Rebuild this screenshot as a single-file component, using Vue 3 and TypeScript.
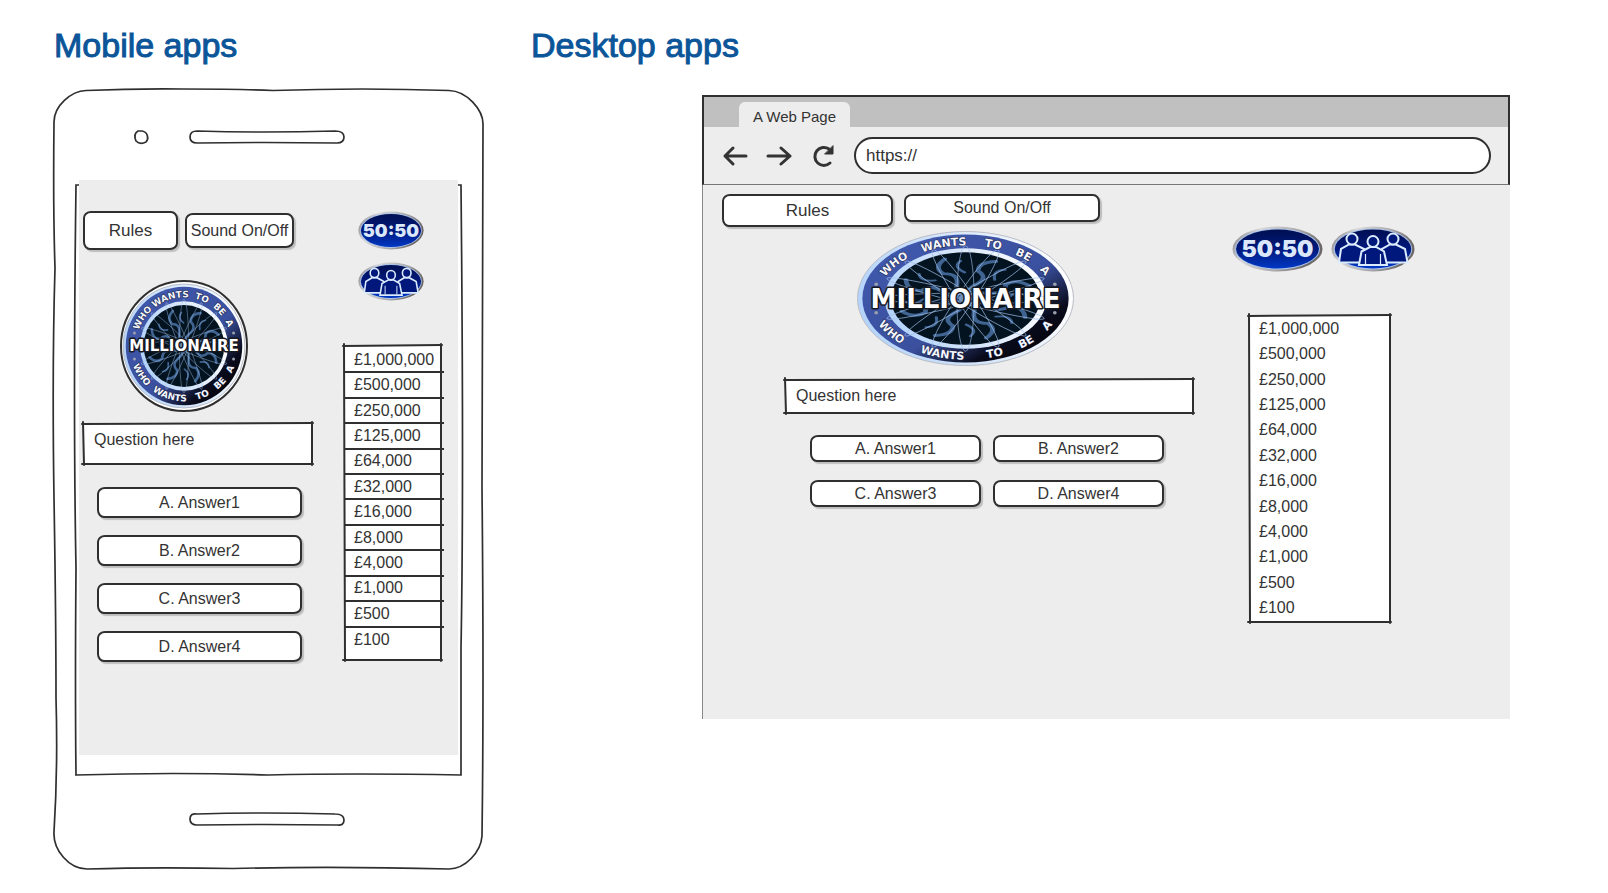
<script setup lang="ts">
import { h } from 'vue'

interface LogoProps {
  w: number
  h: number
  rx: number
  ry: number
  inner: number
  ring: number
  title: number
  disc?: boolean
}

const prizes: string[] = [
  '£1,000,000', '£500,000', '£250,000', '£125,000', '£64,000', '£32,000',
  '£16,000', '£8,000', '£4,000', '£1,000', '£500', '£100',
]
const answers: string[] = ['A. Answer1', 'B. Answer2', 'C. Answer3', 'D. Answer4']

const words: Array<[string, number]> = [
  ['WHO', 12], ['WANTS', 39], ['TO', 64], ['BE', 80], ['A', 93],
]

/* Hand-drawn rectangle outline: four strokes that cross slightly at the corners. */
const Frame = () =>
  h('svg', { class: 'frame', 'aria-hidden': 'true' }, [
    h('g', { stroke: '#2f2f2f', 'stroke-width': 2, 'stroke-linecap': 'round' }, [
      h('line', { x1: -1, y1: 1, x2: '100%', y2: 0 }),
      h('line', { x1: 0, y1: -1, x2: 1, y2: '100%' }),
      h('g', { transform: 'translate(0 -1)' }, [h('line', { x1: -1, y1: '100%', x2: '100%', y2: '100%' })]),
      h('g', { transform: 'translate(-1 0)' }, [h('line', { x1: '100%', y1: -1, x2: '100%', y2: '100%' })]),
    ]),
  ])

/* Show emblem: an elliptical ring with curved lettering and a title across it. */
const Logo = (p: LogoProps) => {
  const cx = p.w / 2
  const cy = p.h / 2
  const id = `ring-${p.w}`
  const arc = (rx: number, ry: number, down: boolean): string => {
    const a = (16 * Math.PI) / 180
    const dx = rx * Math.cos(a)
    const dy = ry * Math.sin(a) * (down ? 1 : -1)
    return `M${cx - dx} ${cy + dy} A${rx} ${ry} 0 0 ${down ? 0 : 1} ${cx + dx} ${cy + dy}`
  }
  const mid = (0.955 + p.inner + 0.02) / 2
  const half = p.ring * 0.37
  const ell = (k: number, fill: string, stroke = 'none', sw = 0) =>
    h('ellipse', { cx, cy, rx: p.rx * k, ry: p.ry * k, fill, stroke, 'stroke-width': sw })
  const lettering = (path: string) =>
    words.map(([word, at]) =>
      h('text', {
        'font-size': p.ring, 'font-weight': 700, fill: '#f4f6ff', stroke: '#1b2140', 'stroke-width': 1,
        'paint-order': 'stroke', 'text-anchor': 'middle',
      }, [h('textPath', { href: `#${path}`, startOffset: `${at}%` }, word)]))
  const stars = [[-1, -1], [1, -1], [-1, 1], [1, 1]].map(([x, y]) =>
    h('circle', { cx: cx + x * p.rx * mid * 0.97, cy: cy + y * p.ry * mid * 0.25, r: p.ring / 6, fill: '#9aa0ac' }))
  return h('svg', {
    class: 'logo', viewBox: `0 0 ${p.w} ${p.h}`, width: p.w, height: p.h, role: 'img',
    'aria-label': 'Who Wants To Be A Millionaire',
  }, [
    h('path', { id: `${id}-top`, fill: 'none', d: arc(p.rx * mid - half, p.ry * mid - half, false) }),
    h('path', { id: `${id}-bottom`, fill: 'none', d: arc(p.rx * mid + half, p.ry * mid + half, true) }),
    p.disc
      ? h('ellipse', { cx, cy, rx: cx - 1, ry: cy - 1, fill: '#fff', stroke: '#2f2f2f', 'stroke-width': 2 })
      : null,
    ell(1, 'url(#rim)', '#b9bcc4', 1),
    ell(0.955, 'url(#ring)'),
    ell(p.inner + 0.02, 'url(#rim)'),
    ell(p.inner - 0.04, '#03131f'),
    h('g', { transform: `translate(${cx} ${cy}) scale(${(p.rx * p.inner) / 100} ${(p.ry * p.inner) / 100})` }, [
      h('use', { href: '#spiro' }),
    ]),
    ...lettering(`${id}-top`),
    ...lettering(`${id}-bottom`),
    ...stars,
    h('text', {
      x: cx, y: cy + p.title * 0.36, 'font-size': p.title, 'font-weight': 700, fill: '#fff', stroke: '#16181f',
      'stroke-width': 3, 'stroke-linejoin': 'round', 'paint-order': 'stroke', 'text-anchor': 'middle',
    }, 'MILLIONAIRE'),
  ])
}
Logo.props = ['w', 'h', 'rx', 'ry', 'inner', 'ring', 'title', 'disc']
</script>

<template>
  <main class="board">
    <svg class="defs" aria-hidden="true">
      <defs>
        <linearGradient id="rim" x1="0" y1="0.6" x2="1" y2="0.4">
          <stop offset="0" stop-color="#b3d3fb" />
          <stop offset="0.5" stop-color="#d6e6fb" />
          <stop offset="1" stop-color="#ffffff" />
        </linearGradient>
        <linearGradient id="ring" x1="0.1" y1="0.1" x2="0.86" y2="0.86">
          <stop offset="0" stop-color="#4058ac" />
          <stop offset="0.62" stop-color="#3a509f" />
          <stop offset="0.88" stop-color="#090b1c" />
          <stop offset="1" stop-color="#05060f" />
        </linearGradient>
        <linearGradient id="metal" x1="0" y1="0" x2="1" y2="0.3">
          <stop offset="0" stop-color="#77747a" />
          <stop offset="0.3" stop-color="#d8d8dc" />
          <stop offset="0.7" stop-color="#aaa8aa" />
          <stop offset="1" stop-color="#6d6767" />
        </linearGradient>
        <linearGradient id="blue" x1="0" y1="0" x2="0" y2="1">
          <stop offset="0" stop-color="#000f52" />
          <stop offset="0.5" stop-color="#00187c" />
          <stop offset="1" stop-color="#0038c4" />
        </linearGradient>
        <symbol id="oval" viewBox="0 0 90 46" preserveAspectRatio="none">
          <ellipse cx="45" cy="23" rx="44.500" ry="22.500" fill="url(#metal)" />
          <ellipse cx="45" cy="23" rx="42" ry="20.500" fill="#a9c3ea" />
          <ellipse cx="45" cy="23" rx="41" ry="19.500" fill="url(#blue)" />
        </symbol>
        <symbol id="audience" viewBox="0 0 84 46" preserveAspectRatio="none">
          <g fill="#00187c" stroke="#dcecff" stroke-width="2" stroke-linejoin="miter">
            <path d="M8 36.500 10 23 18 18.500H24L33 23 35 36.500Z" />
            <circle cx="21" cy="13" r="5.500" />
            <path d="M49 36.500 51 23 59 18.500H65L74 23 76.500 36.500Z" />
            <circle cx="62" cy="13" r="5.500" />
            <path d="M28 39 30.500 25.500 39 21H45L53 25.500 56 39Z" />
            <circle cx="42" cy="15.500" r="5.500" />
            <path d="M34.500 38V28M49.500 38V28" stroke-width="1.200" />
          </g>
        </symbol>
        <g id="spiro" fill="none">
          <g stroke="#3f6492" stroke-width="6" stroke-linecap="round">
            <g v-for="a in 8" :key="`s${a}`" :transform="`rotate(${a * 45 + 12})`">
              <path d="M22 -82Q0 -76 4 -58Q20 -48 8 -32Q-2 -22 0 -4" />
              <path d="M-22 -74Q-30 -60 -12 -52" stroke-width="4" />
            </g>
          </g>
          <g stroke="#9fbde8" stroke-width="1">
            <ellipse v-for="a in 8" :key="`e${a}`" rx="11" ry="108" :transform="`rotate(${a * 22.5})`" />
          </g>
          <circle r="9" fill="#86a8d6" opacity="0.700" />
        </g>
      </defs>
    </svg>

    <section class="mobile">
      <h2>Mobile apps</h2>
      <div class="phone">
        <svg class="shell" viewBox="0 0 430 781" preserveAspectRatio="none" aria-hidden="true">
          <g fill="#fff" stroke="#2f2f2f" stroke-width="1.700">
            <path d="M33 2.500Q80 .5 130 1Q190 1 220 2.500Q310 -.5 396 2.500C414 3 430 22 430 36Q430 200 429 400Q431 600 429 748C428 764 412 781 396 781Q280 778 180 780.500Q100 779 34 781C16 781 0 762 1 744Q5 680 3 610Q3 530 1 410Q-1 280 2 180Q0 120 1 34C1 18 18 3 33 2.500Z" />
            <path d="M89 43C95 44 96 51 93 54Q87 57 83 53Q80 46 85 43Z" />
            <path d="M144 43Q210 45 282 43Q291 43 291 49T284 55Q210 54 144 55Q137 55 137 49T144 43Z" />
            <path d="M23 97H408Q411 400 408 560V687Q300 685 215 687Q120 684 23 687Q22 600 23 480Q20 320 23 97Z" />
            <path d="M144 726Q210 724 282 726Q291 726 291 732T284 737Q210 736 144 737Q137 737 137 731T144 726Z" />
          </g>
        </svg>
        <div class="screen">
          <div class="play">
            <div class="tools">
              <button type="button" class="btn rules">Rules</button>
              <button type="button" class="btn sound">Sound On/Off</button>
            </div>
            <Logo :w="128" :h="132" :rx="61" :ry="62" :inner="0.7" :ring="9" :title="15" :disc="true" />
            <div class="question">
              <textarea aria-label="Question" readonly value="Question here"></textarea>
              <Frame />
            </div>
            <div class="answers">
              <button v-for="a in answers" :key="a" type="button" class="btn">{{ a }}</button>
            </div>
          </div>
          <div class="side">
            <div class="lifelines">
              <button type="button" class="life"><svg aria-hidden="true"><use href="#oval" /></svg><span>50:50</span></button>
              <button type="button" class="life" aria-label="Ask the audience">
                <svg aria-hidden="true"><use href="#oval" /><use href="#audience" /></svg>
              </button>
            </div>
            <div class="ladder">
              <ol><li v-for="p in prizes" :key="p">{{ p }}</li></ol>
              <Frame />
            </div>
          </div>
        </div>
      </div>
    </section>

    <section class="desktop">
      <h2>Desktop apps</h2>
      <div class="browser">
        <div class="tabs"><span class="tab">A Web Page</span></div>
        <div class="bar">
          <button type="button" class="nav" aria-label="Back">
            <svg viewBox="0 0 26 26"><path d="M24 13H3M11 5 3 13 11 21" /></svg>
          </button>
          <button type="button" class="nav" aria-label="Forward">
            <svg viewBox="0 0 26 26"><path d="M2 13H24M15 5 24 13 15 21" /></svg>
          </button>
          <button type="button" class="nav" aria-label="Reload">
            <svg viewBox="0 0 26 26"><path d="M19 6A9 9 0 1 0 20 20" /><path class="tip" d="M23 3V11H15Z" /></svg>
          </button>
          <input type="text" value="https://" aria-label="Address" />
        </div>
        <div class="page">
          <div class="play">
            <div class="tools">
              <button type="button" class="btn rules">Rules</button>
              <button type="button" class="btn sound">Sound On/Off</button>
            </div>
            <Logo :w="217" :h="135" :rx="108" :ry="67" :inner="0.73" :ring="11" :title="26" />
            <div class="question">
              <textarea aria-label="Question" readonly value="Question here"></textarea>
              <Frame />
            </div>
            <div class="answers">
              <button v-for="a in answers" :key="a" type="button" class="btn">{{ a }}</button>
            </div>
          </div>
          <div class="side">
            <div class="lifelines">
              <button type="button" class="life fifty"><svg aria-hidden="true"><use href="#oval" /></svg><span>50:50</span></button>
              <button type="button" class="life" aria-label="Ask the audience">
                <svg aria-hidden="true"><use href="#oval" /><use href="#audience" /></svg>
              </button>
            </div>
            <div class="ladder">
              <ol><li v-for="p in prizes" :key="p">{{ p }}</li></ol>
              <Frame />
            </div>
          </div>
        </div>
      </div>
    </section>
  </main>
</template>

<style>
body {
  margin: 0;
  background: #fff;
}
.logo text {
  font-family: "DejaVu Sans", sans-serif;
}
</style>

<style scoped>
.board {
  display: flex;
  gap: 47px;
  padding: 23px 98px 23px 53px;
  font-family: "Liberation Sans", Arial, sans-serif;
  font-size: 16px;
  color: #333;
}
.board * {
  box-sizing: border-box;
}
.defs {
  position: absolute;
  width: 0;
  height: 0;
}
h2 {
  margin: 0;
  padding-left: 1px;
  font-size: 34px;
  line-height: 44px;
  font-weight: 400;
  color: #0b5599;
  -webkit-text-stroke: 1px #0b5599;
}
button,
input,
textarea {
  font: inherit;
  color: inherit;
  margin: 0;
  padding: 0;
}
.mobile {
  flex: none;
  width: 430px;
}
.desktop {
  flex: 1;
  min-width: 0;
}
.frame,
.shell {
  position: absolute;
  inset: 0;
  width: 100%;
  height: 100%;
  overflow: visible;
  pointer-events: none;
}
.btn {
  background: #fff;
  border: 2px solid #2f2f2f;
  border-radius: 8px 7px 8px 7px / 7px 8px 7px 8px;
  box-shadow: 2px 2px 1px #bdbdbd;
  white-space: nowrap;
}
.rules {
  font-size: 17px;
}
.tools {
  display: flex;
  align-items: center;
}
.logo {
  display: block;
}
.question {
  position: relative;
  background: #fff;
}
.question textarea {
  display: block;
  width: 100%;
  height: 100%;
  border: 0;
  background: none;
  resize: none;
  outline: none;
  overflow: hidden;
  line-height: 20px;
  padding: 7px 11px;
}
.answers {
  display: grid;
}
.ladder {
  position: relative;
  background: #fff;
}
.ladder ol {
  display: grid;
  grid-auto-rows: 1fr;
  height: 305px;
  margin: 0;
  padding: 0;
  list-style: none;
}
.ladder li {
  display: flex;
  align-items: center;
  padding-left: 10px;
}
.life {
  position: relative;
  display: grid;
  place-items: center;
  border: 0;
  background: none;
}
.life svg {
  position: absolute;
  inset: 0;
  width: 100%;
  height: 100%;
}
.life span {
  position: relative;
  font-family: Inter, sans-serif;
  font-weight: 900;
  color: #dbe8fb;
}

.phone {
  position: relative;
  margin-top: 21px;
  padding: 92px 25px 114px 26px;
}
.screen {
  position: relative;
  display: grid;
  grid-template-columns: 1fr 98px;
  gap: 31px;
  min-height: 575px;
  padding: 31px 16px 0 4px;
  background: #ededed;
}
.mobile .tools {
  gap: 7px;
}
.mobile .rules {
  width: 95px;
  height: 39px;
}
.mobile .sound {
  width: 109px;
  height: 35px;
}
.mobile .logo {
  margin: 30px 0 0 37px;
}
.mobile .question {
  height: 42px;
  margin-top: 11px;
}
.mobile .answers {
  gap: 17px;
  padding: 22px 11px 0 14px;
}
.mobile .answers .btn {
  height: 31px;
}
.mobile .lifelines {
  display: grid;
  padding-left: 14px;
  gap: 12px;
}
.mobile .life {
  width: 66px;
  height: 39px;
  font-size: 18px;
}
.mobile .ladder {
  margin-top: 44px;
  padding: 3px 0 8px;
}
.mobile .ladder li {
  margin-right: -2px;
}
.mobile .ladder li:not(:last-child) {
  border-bottom: 2px solid #2f2f2f;
}

.browser {
  margin: 28px 0 0 172px;
  background: #ededed;
}
.tabs {
  display: flex;
  height: 32px;
  padding: 5px 0 0 35px;
  background: #c0c0c0;
  border: 2px solid #2f2f2f;
  border-bottom: 0;
}
.tab {
  width: 111px;
  border-radius: 6px 6px 0 0;
  background: #ededed;
  font-size: 15px;
  line-height: 30px;
  text-align: center;
}
.bar {
  display: flex;
  align-items: center;
  gap: 18px;
  height: 58px;
  padding: 0 17px 0 18px;
  border: 2px solid #2f2f2f;
  border-top: 0;
  border-bottom: 1px solid #777;
}
.nav {
  width: 26px;
  height: 26px;
  border: 0;
  background: none;
}
.nav svg {
  display: block;
  fill: none;
  stroke: #333;
  stroke-width: 3;
  stroke-linecap: round;
  stroke-linejoin: round;
}
.nav .tip {
  fill: #333;
  stroke-width: 1;
}
.bar input {
  flex: 1;
  min-width: 0;
  height: 37px;
  padding: 0 10px;
  border: 2px solid #2f2f2f;
  border-radius: 19px;
  background: #fff;
  font-size: 17px;
  outline: none;
}
.page {
  display: grid;
  grid-template-columns: minmax(0, 1fr) 278px;
  min-height: 534px;
  border-left: 1px solid #888;
}
.page .play {
  padding: 9px 38px 0 0;
}
.desktop .tools {
  align-items: flex-start;
  gap: 11px;
  padding-left: 19px;
}
.desktop .rules {
  width: 171px;
  height: 33px;
}
.desktop .sound {
  width: 196px;
  height: 28px;
}
.desktop .logo {
  margin: 4px 0 0 154px;
}
.desktop .question {
  height: 35px;
  margin: 13px 0 0 82px;
}
.desktop .answers {
  grid-template-columns: 171px 171px;
  gap: 18px 12px;
  padding: 21px 0 0 107px;
}
.desktop .answers .btn {
  height: 27px;
  line-height: 20px;
}
.desktop .lifelines {
  display: flex;
  align-items: center;
  gap: 8px;
  padding-top: 41px;
}
.desktop .life {
  width: 84px;
  height: 46px;
  font-size: 23px;
}
.desktop .fifty {
  width: 91px;
}
.desktop .ladder {
  width: 142px;
  height: 308px;
  margin: 43px 0 0 17px;
  padding-top: 1px;
}
</style>
